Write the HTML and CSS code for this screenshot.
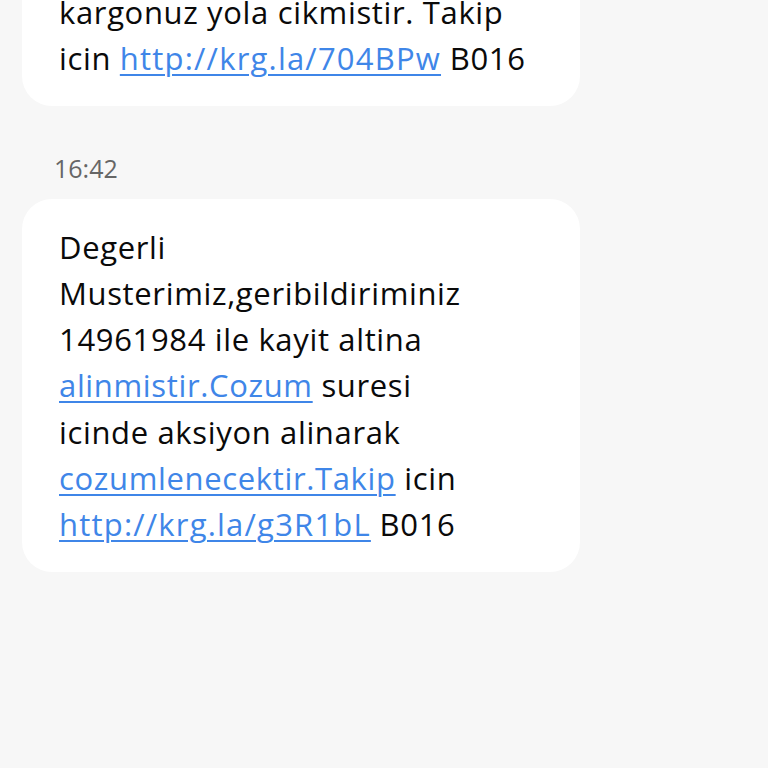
FILE: index.html
```html
<!DOCTYPE html>
<html>
<head>
<meta charset="utf-8">
<link rel="stylesheet" href="styles.css">
</head>
<body>
<div class="thread">
  <div class="bubble first">
    <p class="msg">kargonuz yola cikmistir. Takip<br>icin <a class="link url" href="#">http://krg.la/704BPw</a> B016</p>
  </div>
  <div class="time">16:42</div>
  <div class="bubble">
    <p class="msg">Degerli<br>Musterimiz,geribildiriminiz<br>14961984 ile kayit altina<br><a class="link" href="#">alinmistir.Cozum</a> suresi<br>icinde aksiyon alinarak<br><a class="link" href="#">cozumlenecektir.Takip</a> icin<br><a class="link url" href="#">http://krg.la/g3R1bL</a> B016</p>
  </div>
</div>
</body>
</html>
```
FILE: styles.css
```css
html, body {
  margin: 0;
  padding: 0;
  background: #f7f7f7;
  height: 100%;
  overflow: hidden;
}
.thread {
  display: flex;
  flex-direction: column;
  align-items: flex-start;
  padding: 0 188px 0 22px;
  margin-top: -36px;
  font-family: "Open Sans", "Noto Sans", sans-serif;
}
.bubble {
  background: #fff;
  border-radius: 30px;
  padding: 25px 37px 24px 37px;
  width: 558px;
  box-sizing: border-box;
}
.first {
  border-radius: 0 0 30px 30px;
}
.msg {
  margin: 0;
  font-size: 31px;
  font-weight: 500;
  letter-spacing: 0.65px;
  line-height: 46.3px;
  color: #0a0a0a;
}
.link {
  color: #3f86e8;
  text-decoration: underline;
  text-decoration-thickness: 1.5px;
  text-underline-offset: 4px;
}
.url {
  letter-spacing: 1.2px;
}
.time {
  font-size: 25px;
  color: #666;
  margin: 47px 0 16px 32px;
  line-height: 30px;
}
```
